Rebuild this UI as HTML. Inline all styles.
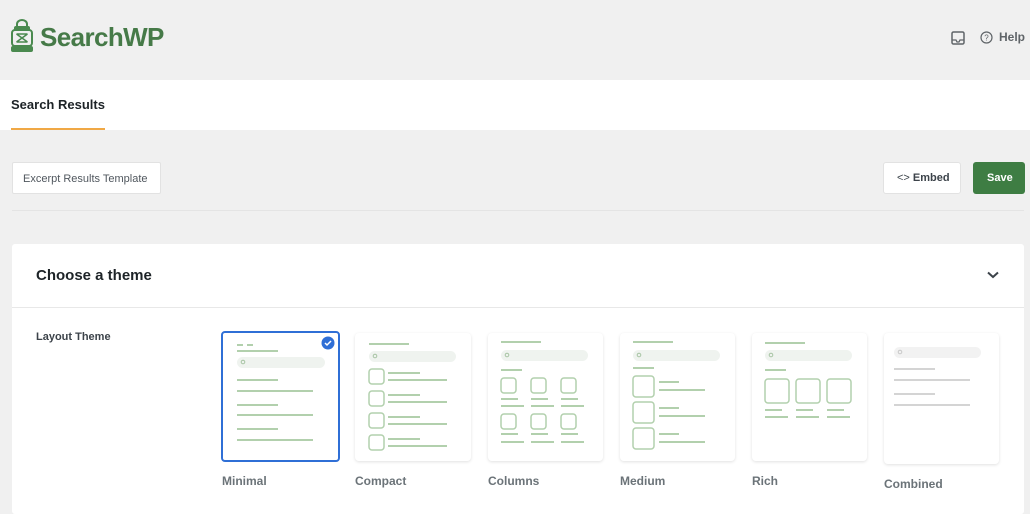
<!DOCTYPE html>
<html><head><style>
*{margin:0;padding:0;box-sizing:border-box}
body{width:1030px;height:506px;background:#f0f0f0;font-family:"Liberation Sans",sans-serif;position:relative;overflow:hidden}
.a{position:absolute}
.card{position:absolute;background:#fff;border-radius:4px;box-shadow:0 1px 3px rgba(0,0,0,.12)}
.lbl{position:absolute;font-size:12px;font-weight:bold;color:#6b7378}
</style></head><body>
<svg class="a" style="left:10px;top:19px" width="24" height="34" viewBox="0 0 24 34">
<g fill="none" stroke="#4a8a4f" stroke-width="2">
<path d="M7 8 v-3 a5 4 0 0 1 10 0 v3"/>
<rect x="5" y="8" width="14" height="3" rx="1" fill="#4a8a4f"/>
<rect x="2" y="11" width="20" height="16" rx="3"/>
<path d="M6.5 15 L17.5 23 M17.5 15 L6.5 23 M6.5 15 h11 M6.5 23 h11" stroke-width="1.5"/>
</g>
<rect x="1" y="27" width="22" height="6" rx="2" fill="#4a8a4f"/>
</svg>
<div class="a" style="left:40px;top:22px;font-size:26px;color:#467a48;font-weight:bold;letter-spacing:-0.6px">SearchWP</div>
<svg class="a" style="left:951px;top:31px" width="14" height="14" viewBox="0 0 14 14"><rect x="1" y="1" width="12" height="12" rx="1.5" fill="none" stroke="#5f6468" stroke-width="1.5"/><path d="M1 9h4l1 2h2l1-2h4" fill="none" stroke="#5f6468" stroke-width="1.3"/></svg>
<svg class="a" style="left:980px;top:31px" width="13" height="13" viewBox="0 0 13 13"><circle cx="6.5" cy="6.5" r="5.5" fill="none" stroke="#5f6468" stroke-width="1.2"/><text x="6.5" y="9.5" font-size="8" text-anchor="middle" fill="#5f6468" font-family="Liberation Sans">?</text></svg>
<div class="a" style="left:999px;top:30px;font-size:12px;color:#5f6468;font-weight:bold">Help</div>

<div class="a" style="left:0;top:80px;width:1030px;height:50px;background:#fff"></div>
<div class="a" style="left:11px;top:97px;font-size:13px;font-weight:bold;color:#1d2327">Search Results</div>
<div class="a" style="left:11px;top:128px;width:94px;height:2px;background:#f0a845"></div>

<div class="a" style="left:12px;top:162px;width:149px;height:32px;background:#fff;border:1px solid #e2e2e2;border-radius:2px;font-size:11px;color:#50575e;padding:10px 0 0 10px">Excerpt Results Template</div>
<div class="a" style="left:883px;top:162px;width:78px;height:32px;background:#fff;border:1px solid #e2e2e2;border-radius:3px;font-size:11px;font-weight:bold;color:#3c434a;padding:9px 0 0 13px"><span style="font-weight:normal">&lt;&gt;</span> Embed</div>
<div class="a" style="left:973px;top:162px;width:52px;height:32px;background:#3e7d43;border-radius:3px;font-size:11px;font-weight:bold;color:#fff;padding:10px 0 0 14px">Save</div>
<div class="a" style="left:12px;top:210px;width:1012px;height:1px;background:#e4e4e4"></div>

<div class="a" style="left:12px;top:244px;width:1012px;height:270px;background:#fff;border-radius:3px"></div>
<div class="a" style="left:36px;top:267px;font-size:15px;font-weight:bold;color:#1d2327">Choose a theme</div>
<svg class="a" style="left:987px;top:271px" width="12" height="8" viewBox="0 0 12 8"><path d="M1 1.5l5 4.5 5-4.5" fill="none" stroke="#3c434a" stroke-width="2"/></svg>
<div class="a" style="left:12px;top:307px;width:1012px;height:1px;background:#e8e8e8"></div>
<div class="a" style="left:36px;top:331px;font-size:11px;font-weight:bold;color:#3c434a">Layout Theme</div>

<div class="card" style="left:221px;top:331px;width:119px;height:131px;border:2px solid #2f6fd6;box-shadow:none"></div>
<svg class="a" style="left:222px;top:332px" width="117" height="129"><g stroke="#b2d0ad" stroke-width="2">
<line x1="15" y1="13" x2="21" y2="13"/><line x1="25" y1="13" x2="31" y2="13"/>
<line x1="15" y1="19" x2="56" y2="19"/>
<line x1="15" y1="48" x2="56" y2="48"/><line x1="15" y1="59" x2="91" y2="59"/>
<line x1="15" y1="73" x2="56" y2="73"/><line x1="15" y1="83" x2="91" y2="83"/>
<line x1="15" y1="97" x2="56" y2="97"/><line x1="15" y1="108" x2="91" y2="108"/></g>
<rect x="15" y="25" width="88" height="11" rx="5.5" fill="#eff3ef"/>
<circle cx="21" cy="30" r="1.8" fill="none" stroke="#a7c4a3"/>
<circle cx="106" cy="11" r="6.5" fill="#2f6fd6"/><path d="M103 11l2 2 4-4" fill="none" stroke="#fff" stroke-width="1.5"/></svg>
<div class="lbl" style="left:222px;top:474px">Minimal</div>

<div class="card" style="left:355px;top:333px;width:116px;height:128px"></div>
<svg class="a" style="left:355px;top:333px" width="116" height="128"><g stroke="#b2d0ad" stroke-width="2" fill="none">
<line x1="14" y1="11" x2="54" y2="11"/>
<rect x="14" y="36" width="15" height="15" rx="3" stroke-width="1.5"/><rect x="14" y="58" width="15" height="15" rx="3" stroke-width="1.5"/><rect x="14" y="80" width="15" height="15" rx="3" stroke-width="1.5"/><rect x="14" y="102" width="15" height="15" rx="3" stroke-width="1.5"/>
<line x1="33" y1="40" x2="65" y2="40"/><line x1="33" y1="47" x2="92" y2="47"/>
<line x1="33" y1="62" x2="65" y2="62"/><line x1="33" y1="69" x2="92" y2="69"/>
<line x1="33" y1="84" x2="65" y2="84"/><line x1="33" y1="91" x2="92" y2="91"/>
<line x1="33" y1="106" x2="65" y2="106"/><line x1="33" y1="113" x2="92" y2="113"/></g>
<rect x="14" y="18" width="87" height="11" rx="5.5" fill="#eff3ef"/><circle cx="20" cy="23" r="1.8" fill="none" stroke="#a7c4a3"/></svg>
<div class="lbl" style="left:355px;top:474px">Compact</div>

<div class="card" style="left:488px;top:333px;width:115px;height:128px"></div>
<svg class="a" style="left:488px;top:333px" width="115" height="128"><g stroke="#b2d0ad" stroke-width="2" fill="none">
<line x1="13" y1="9" x2="53" y2="9"/><line x1="13" y1="37" x2="34" y2="37"/>
<g stroke-width="1.5"><rect x="13" y="45" width="15" height="15" rx="3"/><rect x="43" y="45" width="15" height="15" rx="3"/><rect x="73" y="45" width="15" height="15" rx="3"/>
<rect x="13" y="81" width="15" height="15" rx="3"/><rect x="43" y="81" width="15" height="15" rx="3"/><rect x="73" y="81" width="15" height="15" rx="3"/></g>
<path d="M13 66h17M43 66h17M73 66h17M13 73h23M43 73h23M73 73h23M13 101h17M43 101h17M73 101h17M13 109h23M43 109h23M73 109h23"/></g>
<rect x="13" y="17" width="87" height="11" rx="5.5" fill="#eff3ef"/><circle cx="19" cy="22" r="1.8" fill="none" stroke="#a7c4a3"/></svg>
<div class="lbl" style="left:488px;top:474px">Columns</div>

<div class="card" style="left:620px;top:333px;width:115px;height:128px"></div>
<svg class="a" style="left:620px;top:333px" width="115" height="128"><g stroke="#b2d0ad" stroke-width="2" fill="none">
<line x1="13" y1="9" x2="53" y2="9"/><line x1="13" y1="35" x2="34" y2="35"/>
<g stroke-width="1.5"><rect x="13" y="43" width="21" height="21" rx="3"/><rect x="13" y="69" width="21" height="21" rx="3"/><rect x="13" y="95" width="21" height="21" rx="3"/></g>
<path d="M39 49h20M39 57h46M39 75h20M39 83h46M39 101h20M39 109h46"/></g>
<rect x="13" y="17" width="87" height="11" rx="5.5" fill="#eff3ef"/><circle cx="19" cy="22" r="1.8" fill="none" stroke="#a7c4a3"/></svg>
<div class="lbl" style="left:620px;top:474px">Medium</div>

<div class="card" style="left:752px;top:333px;width:115px;height:128px"></div>
<svg class="a" style="left:752px;top:333px" width="115" height="128"><g stroke="#b2d0ad" stroke-width="2" fill="none">
<line x1="13" y1="10" x2="53" y2="10"/><line x1="13" y1="37" x2="34" y2="37"/>
<g stroke-width="1.5"><rect x="13" y="46" width="24" height="24" rx="3"/><rect x="44" y="46" width="24" height="24" rx="3"/><rect x="75" y="46" width="24" height="24" rx="3"/></g>
<path d="M13 77h17M44 77h17M75 77h17M13 84h23M44 84h23M75 84h23"/></g>
<rect x="13" y="17" width="87" height="11" rx="5.5" fill="#eff3ef"/><circle cx="19" cy="22" r="1.8" fill="none" stroke="#a7c4a3"/></svg>
<div class="lbl" style="left:752px;top:474px">Rich</div>

<div class="card" style="left:884px;top:333px;width:115px;height:131px"></div>
<svg class="a" style="left:884px;top:333px" width="115" height="131"><g stroke="#d4d4d4" stroke-width="2">
<path d="M10 36h41M10 47h76M10 61h41M10 72h76"/></g>
<rect x="10" y="14" width="87" height="11" rx="5.5" fill="#f2f2f2"/><circle cx="16" cy="19" r="1.8" fill="none" stroke="#c8c8c8"/></svg>
<div class="lbl" style="left:884px;top:477px">Combined</div>
</body></html>
